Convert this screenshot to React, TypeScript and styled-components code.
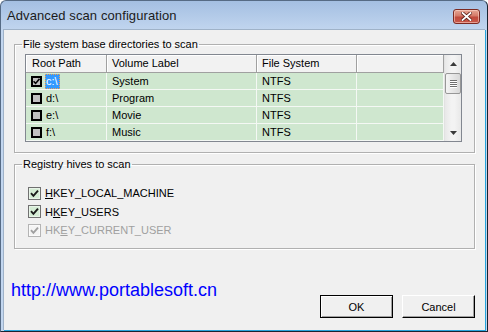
import React from 'react';
import styled, { createGlobalStyle } from 'styled-components';

const GlobalStyle = createGlobalStyle`
  html, body { margin: 0; padding: 0; background: #fff; }
  body { font-family: "Liberation Sans", Arial, sans-serif; font-size: 11px; color: #000; }
  * { box-sizing: border-box; }
`;

const Window = styled.div`
  width: 488px;
  height: 332px;
  display: flex;
  flex-direction: column;
  background: linear-gradient(#a4bfe2, #c2d6ef 30px, #c2d6ef);
  border: 1px solid #566b85;
  border-right-color: #1a2330;
  border-bottom-color: #1a2330;
  border-radius: 6px 6px 0 0;
  padding: 0 2px 1px 2px;
  overflow: hidden;
`;

const TitleBar = styled.div`
  height: 28px;
  flex: none;
  display: flex;
  align-items: center;
  justify-content: space-between;
  padding: 0 5px 0 4px;
`;

const Title = styled.div`
  font-family: "Liberation Sans", Arial, sans-serif;
  font-size: 13px;
  letter-spacing: 0.1px;
  color: #1b1b1b;
  margin-top: 1px;
`;

const CloseButton = styled.div`
  width: 27px;
  height: 15px;
  margin-top: 3px;
  border: 1px solid #7c2a22;
  border-radius: 3px;
  background: linear-gradient(#e6a795, #d47a68 45%, #c04a3c 55%, #c9584a);
  box-shadow: inset 0 0 0 1px rgba(255, 220, 210, 0.55);
  display: flex;
  align-items: center;
  justify-content: center;
`;

const Client = styled.div`
  flex: 1;
  display: flex;
  flex-direction: column;
  background: #f0f0f0;
  border-top: 1px solid #9fb2c8;
  border-left: 1px solid #9fb2c8;
  box-shadow: 1px 1px 0 #27a4dc;
  padding: 8px 10px 12px 10px;
`;

const Group = styled.fieldset`
  margin: 0;
  padding: 0;
  border: 1px solid #b0b0b0;
  box-shadow: 1px 1px 0 #fff, inset 1px 1px 0 #fff;
  min-width: 0;
`;

const Legend = styled.legend`
  margin-left: 7px;
  padding: 0 1px;
  line-height: 13px;
  font-size: 11px;
  color: #000;
`;

const GroupBody = styled.div<{ $pad: string }>`
  padding: ${(p) => p.$pad};
`;

const SecondGroup = styled(Group)`
  margin-top: 5px;
`;

const ListView = styled.div`
  height: 88px;
  border: 1px solid #828790;
  background: #fff;
  display: grid;
  grid-template-columns: 1fr 17px;
`;

const Table = styled.div`
  display: flex;
  flex-direction: column;
  min-width: 0;
`;

const COLS = '81px 150px 100px 1fr';

const HeaderRow = styled.div`
  display: grid;
  grid-template-columns: ${COLS};
  height: 18px;
  background: #f2f2f2;
  border-bottom: 1px solid #a0a0a0;
`;

const HeaderCell = styled.div<{ $pl?: number }>`
  border-right: 1px solid #a0a0a0;
  box-shadow: inset 1px 1px 0 #fff;
  padding-left: ${(p) => p.$pl ?? 5}px;
  line-height: 17px;
  white-space: nowrap;
  overflow: hidden;
`;

const Row = styled.div`
  display: grid;
  grid-template-columns: ${COLS};
  height: 17px;
  background: #cfe7cf;
  border-bottom: 1px solid #f4f8f4;
`;

const Cell = styled.div`
  border-right: 1px solid #f4f8f4;
  padding-left: 5px;
  line-height: 16px;
  white-space: nowrap;
  overflow: hidden;
  display: flex;
  align-items: center;
`;

const StateBox = styled.span`
  width: 11px;
  height: 11px;
  border: 2px solid #000;
  background: #c0c0c0;
  display: inline-flex;
  align-items: center;
  justify-content: center;
  flex: none;
`;

const ItemText = styled.span<{ $selected?: boolean }>`
  margin-left: 3px;
  padding: 0 2px 0 1px;
  height: 15px;
  line-height: 15px;
  background: ${(p) => (p.$selected ? '#3399ff' : 'transparent')};
  color: ${(p) => (p.$selected ? '#fff' : '#000')};
  outline: ${(p) => (p.$selected ? '1px dotted #f0a050' : 'none')};
  outline-offset: -1px;
`;

const ScrollBar = styled.div`
  display: flex;
  flex-direction: column;
  background: linear-gradient(90deg, #e8e8e8, #f3f3f3 40%, #f3f3f3 60%, #e8e8e8);
  border-left: 1px solid #e2e2e2;
`;

const ScrollArrow = styled.div`
  height: 17px;
  display: flex;
  align-items: center;
  justify-content: center;
  flex: none;
`;

const Thumb = styled.div`
  height: 21px;
  margin: 1px 0 0 0;
  border: 1px solid #979797;
  border-radius: 2px;
  background: linear-gradient(90deg, #f4f4f4, #e6e6e6 50%, #d8d8d8);
  display: flex;
  flex-direction: column;
  align-items: center;
  justify-content: center;
  gap: 1px;
`;

const Grip = styled.div`
  width: 7px;
  height: 1px;
  background: #6e6e6e;
  box-shadow: 0 1px 0 #fff;
`;

const Track = styled.div`
  flex: 1;
`;

const CheckRow = styled.div<{ $disabled?: boolean }>`
  height: 18.5px;
  display: flex;
  align-items: center;
  gap: 4px;
  color: ${(p) => (p.$disabled ? '#a0a0a0' : '#000')};
`;

const CheckBox = styled.span<{ $disabled?: boolean }>`
  width: 13px;
  height: 13px;
  flex: none;
  border: 1px solid ${(p) => (p.$disabled ? '#b4b4b4' : '#707070')};
  background: ${(p) => (p.$disabled ? '#f4f4f4' : '#d4ecd4')};
  box-shadow: inset 0 0 0 1px ${(p) => (p.$disabled ? '#fafafa' : '#e8f4e8')};
  display: inline-flex;
  align-items: center;
  justify-content: center;
`;

const Footer = styled.div`
  flex: 1;
  display: flex;
  align-items: flex-end;
  justify-content: space-between;
`;

const Url = styled.div`
  font-family: "Liberation Sans", Arial, sans-serif;
  font-size: 18px;
  line-height: 21px;
  color: #0000ff;
  margin: 0 0 17px -3px;
`;

const Buttons = styled.div`
  display: flex;
  gap: 9px;
`;

const Button = styled.div<{ $default?: boolean }>`
  width: 73px;
  height: 23px;
  display: flex;
  align-items: center;
  justify-content: center;
  background: #f0f0f0;
  border: 1px solid ${(p) => (p.$default ? '#000' : '#fff')};
  border-right-color: #000;
  border-bottom-color: #000;
  box-shadow: ${(p) =>
    p.$default
      ? 'inset 1px 1px 0 #fff, inset -1px -1px 0 #a0a0a0'
      : 'inset -1px -1px 0 #a0a0a0'};
  font-size: 11px;
`;

const ListCheck = () => (
  <svg width="7" height="7" viewBox="0 0 7 7">
    <path d="M0.5 3.2 L2.6 5.4 L6.5 0.8" stroke="#000" strokeWidth="1.6" fill="none" />
  </svg>
);

const Check = ({ color }: { color: string }) => (
  <svg width="9" height="9" viewBox="0 0 9 9">
    <path d="M1 4.2 L3.4 6.8 L8 1.6" stroke={color} strokeWidth="1.9" fill="none" />
  </svg>
);

const UpArrow = () => (
  <svg width="7" height="4" viewBox="0 0 7 4">
    <path d="M0 4 L3.5 0 L7 4 Z" fill="#3a3a3a" />
  </svg>
);

const DownArrow = () => (
  <svg width="7" height="4" viewBox="0 0 7 4">
    <path d="M0 0 L7 0 L3.5 4 Z" fill="#3a3a3a" />
  </svg>
);

const CloseX = () => (
  <svg width="11" height="9" viewBox="0 0 11 9">
    <path d="M1.5 1 L9.5 8 M9.5 1 L1.5 8" stroke="#5a2018" strokeWidth="3.4" strokeLinecap="square" />
    <path d="M1.5 1 L9.5 8 M9.5 1 L1.5 8" stroke="#fff" strokeWidth="1.8" strokeLinecap="square" />
  </svg>
);

const drives = [
  { path: 'c:\\', label: 'System', fs: 'NTFS', checked: true },
  { path: 'd:\\', label: 'Program', fs: 'NTFS', checked: false },
  { path: 'e:\\', label: 'Movie', fs: 'NTFS', checked: false },
  { path: 'f:\\', label: 'Music', fs: 'NTFS', checked: false },
];

export default function App() {
  return (
    <>
      <GlobalStyle />
      <Window>
        <TitleBar>
          <Title>Advanced scan configuration</Title>
          <CloseButton>
            <CloseX />
          </CloseButton>
        </TitleBar>
        <Client>
          <Group>
            <Legend>File system base directories to scan</Legend>
            <GroupBody $pad="3px 12px 10px 10px">
              <ListView>
                <Table>
                  <HeaderRow>
                    <HeaderCell $pl={6}>Root Path</HeaderCell>
                    <HeaderCell>Volume Label</HeaderCell>
                    <HeaderCell>File System</HeaderCell>
                    <HeaderCell />
                  </HeaderRow>
                  {drives.map((d, i) => (
                    <Row key={d.path}>
                      <Cell>
                        <StateBox>{d.checked && <ListCheck />}</StateBox>
                        <ItemText $selected={i === 0}>{d.path}</ItemText>
                      </Cell>
                      <Cell>{d.label}</Cell>
                      <Cell>{d.fs}</Cell>
                      <Cell />
                    </Row>
                  ))}
                </Table>
                <ScrollBar>
                  <ScrollArrow>
                    <UpArrow />
                  </ScrollArrow>
                  <Thumb>
                    <Grip />
                    <Grip />
                    <Grip />
                    <Grip />
                  </Thumb>
                  <Track />
                  <ScrollArrow>
                    <DownArrow />
                  </ScrollArrow>
                </ScrollBar>
              </ListView>
            </GroupBody>
          </Group>
          <SecondGroup>
            <Legend>Registry hives to scan</Legend>
            <GroupBody $pad="13px 10px 8px 13px">
              <CheckRow>
                <CheckBox>
                  <Check color="#1a1a1a" />
                </CheckBox>
                <span>
                  <u>H</u>KEY_LOCAL_MACHINE
                </span>
              </CheckRow>
              <CheckRow>
                <CheckBox>
                  <Check color="#1a1a1a" />
                </CheckBox>
                <span>
                  H<u>K</u>EY_USERS
                </span>
              </CheckRow>
              <CheckRow $disabled>
                <CheckBox $disabled>
                  <Check color="#a0a0a0" />
                </CheckBox>
                <span>
                  HK<u>E</u>Y_CURRENT_USER
                </span>
              </CheckRow>
            </GroupBody>
          </SecondGroup>
          <Footer>
            <Url>http://www.portablesoft.cn</Url>
            <Buttons>
              <Button $default>OK</Button>
              <Button>Cancel</Button>
            </Buttons>
          </Footer>
        </Client>
      </Window>
    </>
  );
}
